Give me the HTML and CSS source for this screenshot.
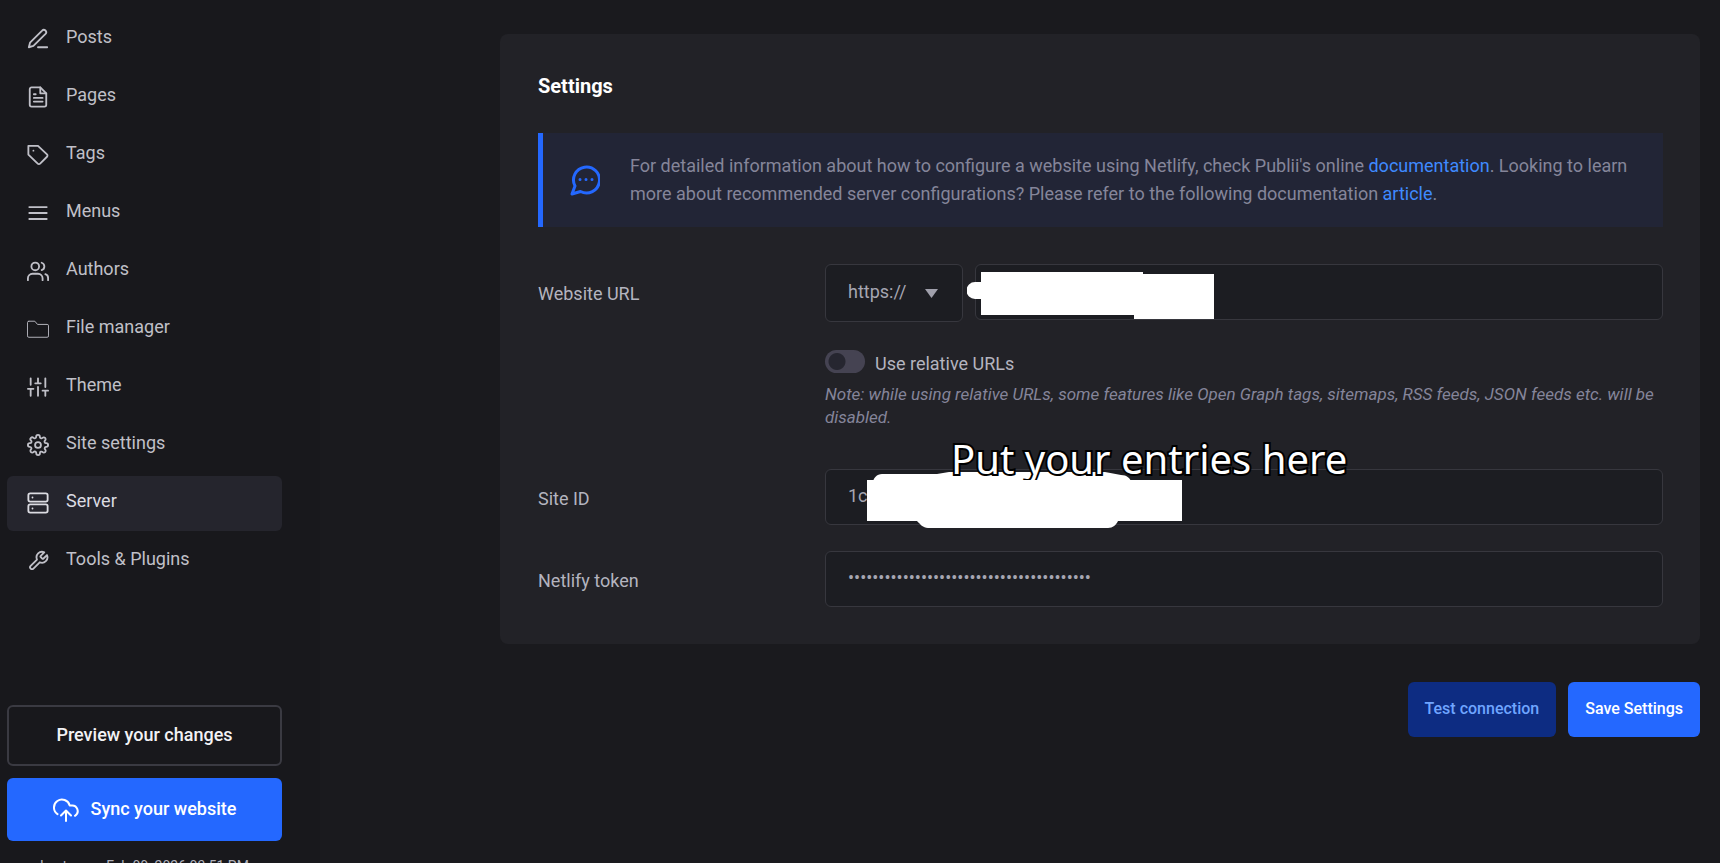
FILE: index.html
```html
<!DOCTYPE html>
<html lang="en">
<head>
    <meta charset="UTF-8">
    <title>Server Settings</title>
    <link rel="stylesheet" href="styles.css">
</head>
<body>
    <div class="app">
        <aside class="sidebar">
            <nav class="menu">
                <a href="#" class="menu-item">
                    <svg class="icon" viewBox="0 0 24 24"><path d="M12 21h10"/><path d="M16.500 2.800a2.500 2.500 0 0 1 3.700 3.500L7 19.500l-5 1.500 1.300-5z"/></svg>
                    <span>Posts</span>
                </a>
                <a href="#" class="menu-item">
                    <svg class="icon" viewBox="0 0 24 24"><path d="M14.500 1.500H5a2 2 0 0 0-2 2v17a2 2 0 0 0 2 2h14a2 2 0 0 0 2-2V8z"/><path d="M14.500 1.500V8H21M7.500 9h2M7.500 13h9.500M7.500 17h9.500"/></svg>
                    <span>Pages</span>
                </a>
                <a href="#" class="menu-item">
                    <svg class="icon" viewBox="0 0 24 24"><path d="M1.500 2H12l9.800 9.300a1.800 1.800 0 0 1 0 2.600l-7.500 7.500a1.800 1.800 0 0 1-2.600 0L1.500 11.500z"/><path d="M7 7.300h.01"/></svg>
                    <span>Tags</span>
                </a>
                <a href="#" class="menu-item">
                    <svg class="icon" viewBox="0 0 24 24"><path d="M2.500 5.500h19M2.500 12h19M2.500 18.500h19"/></svg>
                    <span>Menus</span>
                </a>
                <a href="#" class="menu-item">
                    <svg class="icon" viewBox="0 0 24 24"><circle cx="9" cy="7" r="4.200"/><path d="M1 22v-2a5 5 0 0 1 5-5h6a5 5 0 0 1 5 5v2M16 3a4.200 4.200 0 0 1 0 8M20 15.500a4.500 4.500 0 0 1 3 4.500v2"/></svg>
                    <span>Authors</span>
                </a>
                <a href="#" class="menu-item">
                    <svg class="icon icon-thin" viewBox="0 0 24 24"><path d="M2 3.500h6.500l3 3.500h10.500a1.500 1.500 0 0 1 1.500 1.500v11a1.500 1.500 0 0 1-1.500 1.500H2A1.500 1.500 0 0 1 .500 19.500V5A1.500 1.500 0 0 1 2 3.500"/></svg>
                    <span>File manager</span>
                </a>
                <a href="#" class="menu-item">
                    <svg class="icon" viewBox="0 0 24 24"><path d="M4 21.500V14M4 9.500V2.500M12 21.500V12M12 8V2.500M20 21.500V16M20 12V2.500M1 14h6M9 8h6M17 16h6"/></svg>
                    <span>Theme</span>
                </a>
                <a href="#" class="menu-item">
                    <svg class="icon" viewBox="0 0 24 24"><circle cx="12" cy="12" r="3.200"/><path d="M19.400 15a1.650 1.650 0 0 0 .33 1.820l.06.06a2 2 0 1 1-2.830 2.830l-.06-.06a1.650 1.650 0 0 0-2.800 1.170V21a2 2 0 1 1-4 0v-.09a1.650 1.650 0 0 0-2.900-1.260l-.06.06a2 2 0 1 1-2.830-2.830l.06-.06A1.650 1.650 0 0 0 3.200 14H3a2 2 0 1 1 0-4h.09a1.650 1.650 0 0 0 1.260-2.900l-.06-.06a2 2 0 1 1 2.830-2.830l.06.06A1.650 1.650 0 0 0 10 3.200V3a2 2 0 1 1 4 0v.09a1.650 1.650 0 0 0 2.820 1.180l.06-.06a2 2 0 1 1 2.830 2.830l-.06.06A1.650 1.650 0 0 0 20.800 10H21a2 2 0 1 1 0 4h-.09a1.650 1.650 0 0 0-1.510 1z"/></svg>
                    <span>Site settings</span>
                </a>
                <a href="#" class="menu-item active">
                    <svg class="icon" viewBox="0 0 24 24"><rect x="1.500" y="1.500" width="21" height="9" rx="2"/><rect x="1.500" y="13.500" width="21" height="9" rx="2"/><path d="M6 6h.01M6 18h.01"/></svg>
                    <span>Server</span>
                </a>
                <a href="#" class="menu-item">
                    <svg class="icon" viewBox="0 0 24 24"><path d="M15 6.300a1 1 0 0 0 0 1.400l1.600 1.600a1 1 0 0 0 1.400 0l3.800-3.800a6 6 0 0 1-7.900 7.900l-6.900 6.900a2.100 2.100 0 0 1-3-3l6.900-6.900a6 6 0 0 1 7.900-7.900z"/></svg>
                    <span>Tools &amp; Plugins</span>
                </a>
            </nav>
            <div class="sync">
                <button type="button" class="btn-preview">Preview your changes</button>
                <button type="button" class="btn-sync">
                    <svg class="icon-cloud" viewBox="0 0 26 24"><path d="M4.500 16.200A8 8 0 1 1 16.700 7.500h1.600a5.600 5.600 0 0 1 3.700 10.300M13 23V12.500M8 17.500l5-5 5 5"/></svg>
                    <span>Sync your website</span>
                </button>
                <p class="last-sync">Last sync: Feb 09, 2026 03:51 PM</p>
            </div>
        </aside>

        <main class="content">
            <form id="serverForm">
                <section class="panel">
                    <h2>Settings</h2>
                    <div class="info">
                        <svg class="info-icon" viewBox="0 0 30 32"><path d="M2 30l3-8a13 13 0 1 1 5.500 5.500z"/><path class="dots" d="M10 15.500h.01M16 15.500h.01M22 15.500h.01"/></svg>
                        <p>For detailed information about how to configure a website using Netlify, check Publii's online <a href="#">documentation</a>. Looking to learn more about recommended server configurations? Please refer to the following documentation <a href="#">article</a>.</p>
                    </div>

                    <div class="field">
                        <label for="domain">Website URL</label>
                        <div class="control">
                            <div class="url-row">
                                <select id="protocol" aria-label="Protocol">
                                    <option>https://</option>
                                    <option>http://</option>
                                </select>
                                <div class="input-wrap">
                                    <input type="text" id="domain">
                                    <svg class="mask mask-url" width="250" height="50" viewBox="0 0 250 50"><path d="M14 0h162v2h71v45h-80v-4H14V27H8a8 8 0 0 1 0-17h6z"/></svg>
                                </div>
                            </div>
                            <label class="switch">
                                <input type="checkbox" id="relative">
                                <span>Use relative URLs</span>
                            </label>
                            <p class="note">Note: while using relative URLs, some features like Open Graph tags, sitemaps, RSS feeds, JSON feeds etc. will be disabled.</p>
                        </div>
                    </div>

                    <div class="field">
                        <label for="siteId">Site ID</label>
                        <div class="control input-wrap">
                            <input type="text" id="siteId" value="1c">
                            <svg class="mask mask-id" width="315" height="58" viewBox="0 0 315 58"><path d="M6 12c0-5 4-9 9-9h55l12-2h130l26 0 16 3c6 0 9 3 11 8v38h-14c-2 4-5 7-10 7H61c-5 0-8-4-11-7H6z"/></svg>
                            <span class="hint">Put your entries here</span>
                            <svg class="mask mask-id" width="315" height="58" viewBox="0 0 315 58"><rect y="9" width="315" height="41"/></svg>
                        </div>
                    </div>

                    <div class="field">
                        <label for="token">Netlify token</label>
                        <div class="control">
                            <input type="password" id="token" value="1234567890123456789012345678901234567890">
                        </div>
                    </div>
                </section>

                <div class="actions">
                    <button type="button" class="btn-test">Test connection</button>
                    <button type="submit" class="btn-save">Save Settings</button>
                </div>
            </form>
        </main>
    </div>
</body>
</html>
```
FILE: styles.css
```css
* {
    box-sizing: border-box;
}

body {
    margin: 0;
    background: #1a1a1e;
    color: #b4b4bf;
    font-family: Roboto, sans-serif;
    font-size: 18px;
}

a {
    color: #3f8aff;
    text-decoration: none;
}

h2,
p {
    margin: 0;
}

button,
input,
select {
    font: inherit;
}

.app {
    display: flex;
    height: 100vh;
    overflow: hidden;
}

/* Sidebar */

.sidebar {
    display: flex;
    flex-direction: column;
    justify-content: space-between;
    flex: 0 0 320px;
    padding: 12px 38px 0 7px;
    background: #18181c;
}

.menu {
    display: flex;
    flex-direction: column;
    gap: 3px;
}

.menu-item {
    display: flex;
    align-items: center;
    gap: 17px;
    height: 55px;
    padding: 0 20px 2px;
    border-radius: 6px;
    color: #c0c0c8;
}

.menu-item span {
    padding-bottom: 4px;
}

.menu-item.active {
    background: #25252d;
    color: #dcdce2;
}

.icon {
    width: 22px;
    height: 22px;
    fill: none;
    stroke: currentColor;
    stroke-width: 2;
    stroke-linecap: round;
    stroke-linejoin: round;
}

.icon-thin {
    stroke-width: 1;
}

.sync {
    display: flex;
    flex-direction: column;
    gap: 12px;
}

.btn-preview,
.btn-sync {
    display: flex;
    align-items: center;
    justify-content: center;
    padding: 0 6px 3px;
    border-radius: 6px;
    font-weight: 500;
    cursor: pointer;
}

.btn-preview {
    height: 61px;
    border: 2px solid #3a3a42;
    background: none;
    color: #f2f2f5;
}

.btn-sync {
    gap: 12px;
    height: 63px;
    border: none;
    background: #2468ff;
    color: #fff;
}

.icon-cloud {
    width: 26px;
    height: 24px;
    margin-top: 3px;
    fill: none;
    stroke: #fff;
    stroke-width: 2;
    stroke-linecap: round;
    stroke-linejoin: round;
}

.last-sync {
    height: 10px;
    color: #b0b0ba;
    font-size: 14px;
    line-height: 26px;
    text-align: center;
    white-space: nowrap;
}

/* Content */

.content {
    flex: 1;
    padding: 34px 20px 0 180px;
}

.panel {
    padding: 38px 37px 33px 38px;
    border-radius: 8px;
    background: #222227;
}

.panel h2 {
    margin-bottom: 33px;
    color: #fff;
    font-size: 20px;
    font-weight: 700;
    line-height: 28px;
}

.info {
    display: flex;
    align-items: center;
    gap: 30px;
    margin-bottom: 37px;
    padding: 19px 30px 19px 27px;
    border-left: 5px solid #2468ff;
    background: #222536;
    color: #85859a;
    line-height: 28px;
}

.info-icon {
    flex: 0 0 30px;
    height: 32px;
    fill: none;
    stroke: #2468ff;
    stroke-width: 3;
    stroke-linejoin: round;
}

.info-icon .dots {
    stroke-linecap: round;
}

.field {
    display: flex;
    margin-bottom: 22px;
}

.field:last-child {
    margin-bottom: 0;
}

.field > label {
    flex: 0 0 287px;
    line-height: 60px;
}

.control {
    flex: 1;
}

.input-wrap {
    position: relative;
    flex: 1;
}

input[type="text"],
input[type="password"],
select {
    display: block;
    width: 100%;
    height: 56px;
    padding: 0 22px 3px;
    border: 1px solid #37373e;
    border-radius: 6px;
    outline: none;
    background: #1c1d22;
    color: #a6a6b2;
}

.url-row {
    display: flex;
    gap: 12px;
}

.url-row select {
    width: 138px;
    height: 58px;
    appearance: none;
    background: #1c1d22 url("data:image/svg+xml,%3Csvg xmlns='http://www.w3.org/2000/svg' width='13' height='9'%3E%3Cpath d='M0 0h13L6.5 9z' fill='%23a0a0ac'/%3E%3C/svg%3E") no-repeat right 24px center;
}

.switch {
    display: flex;
    align-items: center;
    gap: 10px;
    height: 23px;
    margin-top: 28px;
}

.switch span {
    padding-top: 4px;
}

.switch input {
    appearance: none;
    width: 40px;
    height: 23px;
    margin: 0;
    border-radius: 12px;
    background: radial-gradient(circle at 12px 50%, #262630 8px, #454352 9px);
}

.note {
    margin: 10px 0 18px;
    color: #85859a;
    font-size: 17px;
    font-style: italic;
    line-height: 23px;
}

/* White strokes over the private values */

.mask {
    position: absolute;
    fill: #fff;
}

.mask-url {
    top: 8px;
    left: -8px;
}

.mask-id {
    top: 2px;
    left: 42px;
}

.hint {
    position: absolute;
    top: -37px;
    left: 126px;
    color: #fff;
    font-family: "Noto Sans", sans-serif;
    font-size: 40px;
    line-height: 54px;
    white-space: nowrap;
    paint-order: stroke fill;
    -webkit-text-stroke: 4px #000;
}

.actions {
    display: flex;
    justify-content: flex-end;
    gap: 12px;
    margin-top: 38px;
}

.actions button {
    height: 55px;
    padding: 0 17px 2px;
    border: none;
    border-radius: 6px;
    font-size: 16px;
    font-weight: 500;
    cursor: pointer;
}

.btn-test {
    background: #0d2c82;
    color: #6fa5ff;
}

.btn-save {
    background: #2468ff;
    color: #fff;
}
```
